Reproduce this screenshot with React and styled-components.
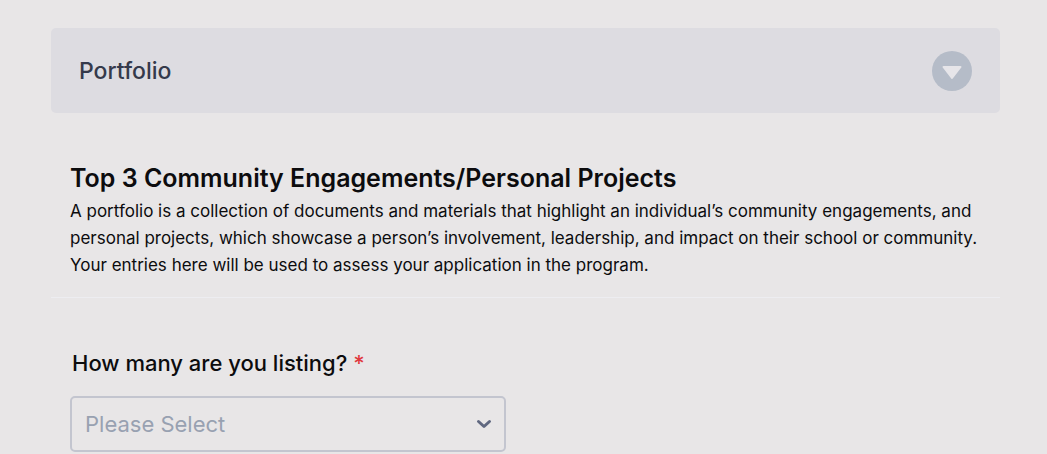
import React from "react";
import styled, { createGlobalStyle } from "styled-components";

const GlobalStyle = createGlobalStyle`
  *, *::before, *::after { box-sizing: border-box; }
  body {
    margin: 0;
    background: #e8e6e7;
    color: #0c0c0e;
    font-family: Inter, "Liberation Sans", sans-serif;
  }
`;

const Form = styled.form`
  margin: 28px 47px 0 51px;
`;

const SectionBar = styled.button`
  display: flex;
  align-items: center;
  justify-content: space-between;
  width: 100%;
  height: 85px;
  padding: 0 28px;
  border: 0;
  border-radius: 5px;
  background: #dddce1;
  color: #353a4b;
  font: 500 23px/28px Inter, sans-serif;
  font-variant-ligatures: none;
  text-align: left;
  cursor: pointer;
`;

const ToggleIcon = styled.svg`
  display: block;
  width: 40px;
  height: 40px;
`;

const Header = styled.header`
  padding: 49px 19px 18px;
  border-bottom: 1px solid #ededf1;
`;

const Title = styled.h2`
  margin: 0;
  font-size: 25px;
  line-height: 32px;
  font-weight: 600;
`;

const Description = styled.p`
  margin: 4px 0 0;
  font-size: 17px;
  line-height: 27px;
`;

const Field = styled.div`
  padding: 49px 19px 0;
`;

const Label = styled.label`
  display: block;
  margin: 0 0 17px 2px;
  font-size: 22px;
  line-height: 32px;
  font-weight: 500;
`;

const Required = styled.span`
  color: #e0393e;
`;

const SelectBox = styled.div`
  display: grid;
  align-items: center;
  max-width: 436px;
  > * { grid-area: 1 / 1; }
`;

const Select = styled.select`
  appearance: none;
  width: 100%;
  height: 56px;
  padding: 0 44px 0 13px;
  border: 2px solid #c3c5cf;
  border-radius: 5px;
  background: transparent;
  color: #98a1b1;
  font: 400 22px/30px Inter, sans-serif;
`;

const Chevron = styled.svg`
  justify-self: end;
  width: 16px;
  height: 12px;
  margin-right: 14px;
  pointer-events: none;
`;

export default function App() {
  return (
    <>
      <GlobalStyle />
      <Form>
        <SectionBar type="button" aria-expanded="true">
          Portfolio
          <ToggleIcon viewBox="0 0 40 40" aria-hidden="true">
            <circle cx="20" cy="20" r="20" fill="#b5bcc8" />
            <path d="M11.5 16h17l-8.500 11z" fill="#e6e5e9" stroke="#e6e5e9" strokeWidth="2" strokeLinejoin="round" />
          </ToggleIcon>
        </SectionBar>
        <Header>
          <Title>Top 3 Community Engagements/Personal Projects</Title>
          <Description>
            A portfolio is a collection of documents and materials that highlight an individual’s community engagements, and
            personal projects, which showcase a person’s involvement, leadership, and impact on their school or community.
            Your entries here will be used to assess your application in the program.
          </Description>
        </Header>
        <Field>
          <Label htmlFor="listing-count">
            How many are you listing? <Required>*</Required>
          </Label>
          <SelectBox>
            <Select id="listing-count" defaultValue="" required>
              <option value="">Please Select</option>
              <option>1</option>
              <option>2</option>
              <option>3</option>
            </Select>
            <Chevron viewBox="0 0 16 12" aria-hidden="true">
              <path d="M2.500 3.500l5.500 5 5.500-5" fill="none" stroke="#606880" strokeWidth="3" strokeLinecap="round" strokeLinejoin="round" />
            </Chevron>
          </SelectBox>
        </Field>
      </Form>
    </>
  );
}
